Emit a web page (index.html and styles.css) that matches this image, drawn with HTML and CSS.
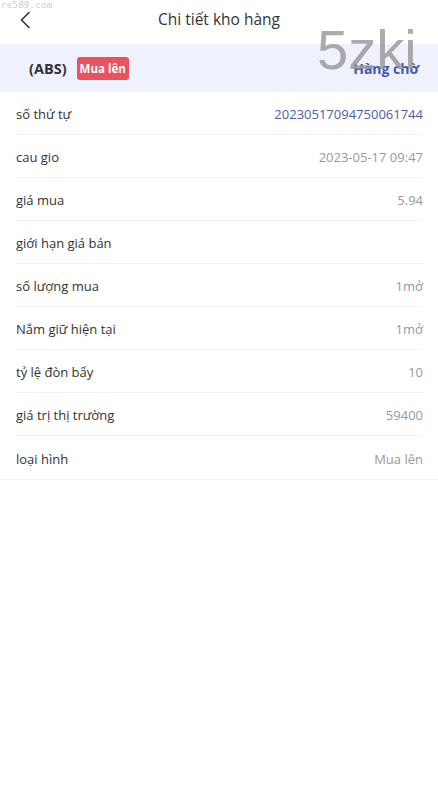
FILE: index.html
```html
<!DOCTYPE html>
<html lang="vi">
<head>
<meta charset="utf-8">
<link rel="stylesheet" href="styles.css">
</head>
<body>
<div class="page">
  <div class="wm-small">re589.com</div>
  <div class="wm-big">5zki</div>
  <header class="nav">
    <span class="back">
      <svg width="12" height="18" viewBox="0 0 12 18"><path d="M10 1.5 L2.5 9 L10 16.5" fill="none" stroke="#333" stroke-width="1.6" stroke-linecap="round" stroke-linejoin="round"/></svg>
    </span>
    <h1 class="title">Chi tiết kho hàng</h1>
  </header>
  <section class="band">
    <div class="band-left">
      <span class="sym">(ABS)</span>
      <span class="tag">Mua lên</span>
    </div>
    <span class="status">Hàng chờ</span>
  </section>
  <ul class="list">
    <li class="row"><span class="lbl">số thứ tự</span><span class="val val-blue">20230517094750061744</span></li>
    <li class="row"><span class="lbl">cau gio</span><span class="val">2023-05-17 09:47</span></li>
    <li class="row"><span class="lbl">giá mua</span><span class="val">5.94</span></li>
    <li class="row"><span class="lbl">giới hạn giá bán</span><span class="val"></span></li>
    <li class="row"><span class="lbl">số lượng mua</span><span class="val">1mở</span></li>
    <li class="row"><span class="lbl">Nắm giữ hiện tại</span><span class="val">1mở</span></li>
    <li class="row"><span class="lbl">tỷ lệ đòn bẩy</span><span class="val">10</span></li>
    <li class="row"><span class="lbl">giá trị thị trường</span><span class="val">59400</span></li>
    <li class="row"><span class="lbl">loại hình</span><span class="val">Mua lên</span></li>
  </ul>
</div>
</body>
</html>
```
FILE: styles.css
```css
* { box-sizing: border-box; }
html, body { margin: 0; padding: 0; background: #fff; }
body { font-family: "Open Sans", "Noto Sans", sans-serif; color: #333; }
.page { position: relative; width: 438px; min-height: 802px; background: #fff; }
.wm-small {
  position: absolute; left: 1px; top: 0; font-family: "DejaVu Sans Mono", monospace;
  font-size: 9px; color: #cdcdcd; line-height: 11px; z-index: 5; letter-spacing: 0.3px;
}
.wm-big {
  position: absolute; left: 317px; top: 18px; font-family: "Liberation Sans", sans-serif;
  font-size: 56px; line-height: 64px; color: rgba(150,150,150,0.8); z-index: 5;
}
.nav { height: 44px; display: flex; align-items: center; justify-content: center; position: relative; padding-bottom: 4px; }
.back { position: absolute; left: 19px; top: 11px; display: flex; }
.title { margin: 0; font-size: 15.5px; font-weight: 500; color: #333; line-height: 1; }
.band {
  height: 48px; background: #eff1fc; display: flex; align-items: center;
  justify-content: space-between; padding: 0 19px 0 29px;
}
.band-left { display: flex; align-items: center; gap: 10px; }
.sym { font-size: 14.5px; font-weight: 700; color: #333; }
.tag {
  background: #e9525e; color: #fff; font-size: 11.5px; font-weight: 700;
  padding: 0 3px; height: 23px; line-height: 23px; border-radius: 3px;
}
.status { font-size: 14px; font-weight: 700; color: #3e57b8; }
.list { list-style: none; margin: 0; padding: 0 15px 0 16px; border-bottom: 1px solid #f4f4f4; }
.row {
  height: 43px; display: flex; align-items: center; justify-content: space-between;
  border-bottom: 1px solid #f3f3f3; font-size: 13px; padding-top: 2px;
}
.row:last-child { border-bottom: none; }
.lbl { color: #333; }
.val { color: #999; }
.val-blue { color: #4a5ea6; }
```
